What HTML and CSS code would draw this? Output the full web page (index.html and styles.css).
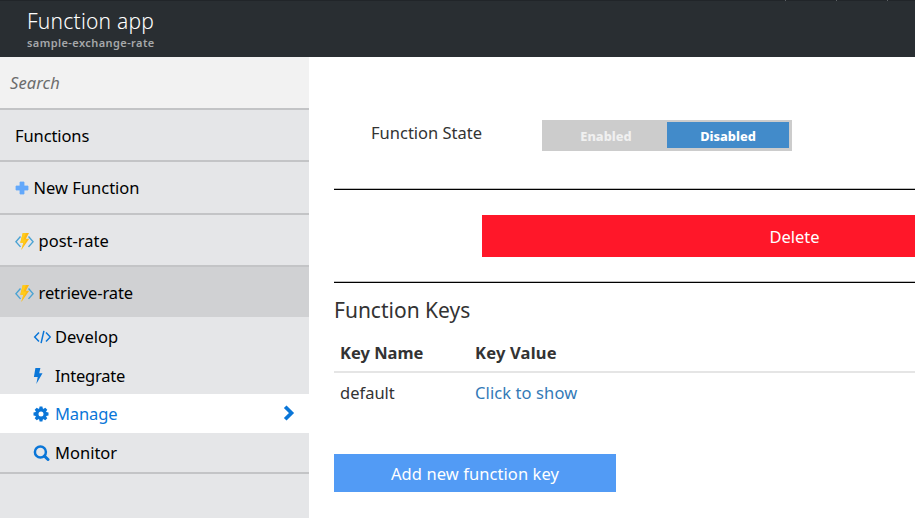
FILE: index.html
```html
<!DOCTYPE html>
<html lang="en">
<head>
<meta charset="utf-8">
<title>Function app</title>
<link rel="stylesheet" href="styles.css">
</head>
<body>
<svg class="defs" width="0" height="0" aria-hidden="true">
  <symbol id="fn" viewBox="0 0 19 17">
    <path d="M5.500 3.500 .9 8.700l4.600 5.200M13.500 3.500 18.100 8.700l-4.600 5.200" fill="none" stroke="#4ba3d3" stroke-width="1.400"/>
    <path d="M7.800 0h6.200L10.900 5.800h3.300L6.300 17l2.100-7.300H5.300Z" fill="#fdb913"/>
    <path d="M7.800 0h3.200L8.500 6.500h3L6.300 17l2.100-7.300H5.300Z" fill="#ffcb1c"/>
  </symbol>
</svg>
<header class="topbar">
  <div class="ticks"><i></i><i></i><i></i></div>
  <h1 class="app-title">Function app</h1>
  <p class="app-name">sample-exchange-rate</p>
</header>
<div class="layout">
  <nav class="sidebar">
    <div class="search">Search</div>
    <div class="row"><span class="t-functions">Functions</span></div>
    <div class="row row-tall">
      <svg class="plus" viewBox="0 0 14 14"><path d="M5 1h4v4h4v4H9v4H5V9H1V5h4Z" fill="#63a8fb" stroke="#63a8fb" stroke-width=".8" stroke-linejoin="round"/></svg>
      <span class="t-new">New Function</span>
    </div>
    <div class="row"><svg class="fn-icon"><use href="#fn"/></svg><span class="t-post">post-rate</span></div>
    <div class="row selected"><svg class="fn-icon"><use href="#fn"/></svg><span class="t-retrieve">retrieve-rate</span></div>
    <div class="sub">
      <div class="item"><svg class="icon" viewBox="0 0 18 16"><path d="M6 3.600 1.700 8 6 12.400M13 3.600 17.300 8 13 12.400M10.900 1.800 8.100 14.200" fill="none" stroke="#0a76d8" stroke-width="1.500"/></svg><span class="t-develop">Develop</span></div>
      <div class="item"><svg class="icon" viewBox="0 0 18 16"><path d="M2.400 0h5L6.200 5.200h3.300L3.300 16l1.400-6.900H.9Z" fill="#0a76d8"/></svg><span class="t-integrate">Integrate</span></div>
      <div class="item active"><svg class="icon" viewBox="0 0 18 16"><g fill="#0a76d8"><path fill-rule="evenodd" d="M8 2.200a5.800 5.800 0 1 0 0 11.600 5.800 5.800 0 0 0 0-11.600Zm0 3.300a2.500 2.500 0 1 1 0 5 2.500 2.500 0 0 1 0-5Z"/><path d="M6.600.5h2.800l.5 2.500H6.100ZM6.600 15.500h2.800l.5-2.500H6.100ZM.5 6.600v2.800l2.500.5V6.100ZM15.500 6.600v2.800l-2.500.5V6.100ZM1.700 3.700l2-2 2.100 1.400-2.700 2.700ZM12.300 1.700l2 2-1.400 2.100-2.700-2.700ZM14.300 12.300l-2 2-2.100-1.400 2.700-2.700ZM3.700 14.300l-2-2 1.400-2.100 2.700 2.700Z"/></g></svg><span class="t-manage">Manage</span>
        <svg class="chevron" viewBox="0 0 12 16"><path d="M2.200 1.700 8.500 8l-6.300 6.300" fill="none" stroke="#0a76d8" stroke-width="3.700"/></svg></div>
      <div class="item monitor"><svg class="icon" viewBox="0 0 18 16"><g fill="none" stroke="#0a76d8"><circle cx="7.400" cy="6.900" r="5.500" stroke-width="2.500"/><path d="m11.500 11.200 3.500 3.300" stroke-width="3" stroke-linecap="round"/></g></svg><span class="t-monitor">Monitor</span></div>
    </div>
  </nav>
  <main class="content">
    <section class="state">
      <span class="state-label">Function State</span>
      <div class="toggle"><span class="off">Enabled</span><span class="on">Disabled</span></div>
    </section>
    <section class="danger"><button class="delete">Delete</button></section>
    <h2 class="keys-title">Function Keys</h2>
    <div class="keys head"><span class="t-kn">Key Name</span><span class="t-kv">Key Value</span></div>
    <div class="keys"><span class="t-default">default</span><a class="t-click">Click to show</a></div>
    <button class="add">Add new function key</button>
  </main>
</div>
</body>
</html>
```

FILE: styles.css
```css
* { box-sizing: border-box; }
body {
  margin: 0;
  height: 518px;
  overflow: hidden;
  background: #fff;
  color: #000;
  font: 400 16.5px/24px "Noto Sans", "Open Sans", sans-serif;
}
.defs { position: absolute; }
svg { flex: none; }
span, a { white-space: nowrap; }

.topbar {
  height: 57px;
  padding-left: 27px;
  background: #292e32;
  border-top: 1px solid #212529;
  color: #fff;
}
.ticks { position: absolute; top: 0; left: 785px; display: flex; gap: 50px; }
.ticks i { width: 1px; height: 1px; background: #5b5f63; }
.app-title { margin: 0; padding-top: 6px; font-size: 21px; line-height: 28px; font-weight: 300; letter-spacing: .22px; }
.app-name { margin: 0; font-size: 11px; line-height: 16px; font-weight: 600; letter-spacing: .42px; color: #a6a8aa; }

.layout { display: flex; height: 461px; }
.sidebar { width: 309px; background: #e5e6e8; }
.search {
  height: 53px;
  padding: 14px 10px 0;
  background: #f2f2f2;
  border-bottom: 2px solid #c3c4c6;
  color: #6c6c6c;
  font-style: italic;
  letter-spacing: .1px;
}
.row {
  display: flex;
  align-items: center;
  height: 52px;
  padding: 2px 0 0 15px;
  border-bottom: 2px solid #c3c4c6;
}
.row-tall { height: 53px; padding-top: 1px; }
.selected { height: 50px; border: 0; background: #d0d1d3; }
.plus { width: 14px; height: 14px; margin-right: 4.5px; }
.fn-icon { width: 19px; height: 17px; margin: 1px 4.5px 0 0; }
.sub { display: grid; grid-template-rows: 38px 39px 39px 39px; border-bottom: 2px solid #c3c4c6; }
.item { display: flex; align-items: center; padding: 2px 14px 0 33px; }
.icon { width: 18px; height: 16px; margin-right: 4px; }
.active { padding-top: 1px; background: #fff; color: #0a76d8; }
.monitor { padding-top: 1px; }
.chevron { width: 12px; height: 16px; margin: -3px 0 0 auto; }
.t-functions, .t-retrieve { letter-spacing: -.1px; }
.t-integrate { letter-spacing: -.25px; }
.t-manage { letter-spacing: -.1px; }

.content { width: 606px; padding-left: 25px; overflow: hidden; color: #333; }
.state {
  display: flex;
  align-items: flex-start;
  height: 133px;
  padding: 63px 0 0 37px;
  border-bottom: 1px solid #000;
  box-shadow: inset 0 -1px #bdbdbd;
}
.state-label { width: 171px; padding-top: 1px; }
.toggle {
  display: flex;
  width: 250px;
  height: 31px;
  padding: 2px 3px 3px 2px;
  background: #ccc;
  font-size: 12.8px;
  font-weight: 800;
  line-height: 28px;
  text-align: center;
}
.off { width: 123px; padding-left: 1px; color: #f0f0f0; }
.on { width: 122px; background: #428bca; color: #fff; }
.danger { height: 93px; padding: 25px 0 0 148px; border-bottom: 1px solid #000; box-shadow: inset 0 -1px #bdbdbd; }
button { display: block; padding: 0; border: 0; color: #fff; font: inherit; }
.delete { width: 625px; height: 42px; padding-top: 2px; background: #ff1729; }
.keys-title { margin: 12px 0 1px; font-size: 21px; font-weight: 400; line-height: 30px; }
.keys { display: grid; grid-template-columns: 135px 1fr; padding: 8px 0 0 6px; height: 41px; }
.head { height: 47px; padding-top: 15px; border-bottom: 2px solid #e5e5e5; font-weight: 700; }
.t-kv { letter-spacing: .2px; }
.t-click { letter-spacing: .1px; }
a { color: #337ab7; }
.add { width: 282px; height: 38px; margin-top: 40px; padding-top: 2px; background: #529bf5; letter-spacing: .08px; }
```
